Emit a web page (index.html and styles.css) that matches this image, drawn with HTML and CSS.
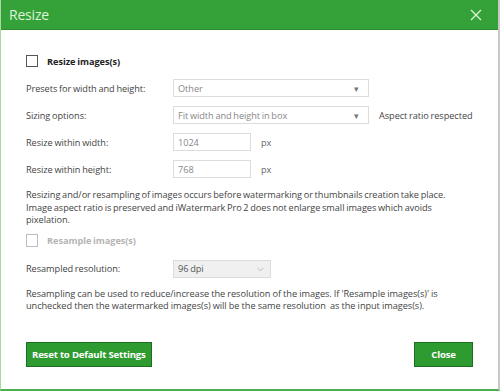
FILE: index.html
```html
<!DOCTYPE html>
<html>
<head>
<meta charset="utf-8">
<title>Resize</title>
<link rel="stylesheet" href="styles.css">
</head>
<body>
<div class="dialog">
	<div class="titlebar">
		<span class="title">Resize</span>
		<svg class="close" width="12" height="12" viewBox="0 0 12 12"><path d="M1 1L11 11M11 1L1 11" stroke="#d9f2d4" stroke-width="1.4" fill="none"/></svg>
	</div>
	<div class="content">
		<label class="check"><span class="box"></span>Resize images(s)</label>
		<div class="row first">
			<span class="label">Presets for width and height:</span>
			<div class="select wide">Other<span class="arrow">&#9662;</span></div>
		</div>
		<div class="row">
			<span class="label">Sizing options:</span>
			<div class="select wide">Fit width and height in box<span class="arrow">&#9662;</span></div>
			<span class="note">Aspect ratio respected</span>
		</div>
		<div class="row">
			<span class="label">Resize within width:</span>
			<div class="input">1024</div>
			<span class="unit">px</span>
		</div>
		<div class="row">
			<span class="label">Resize within height:</span>
			<div class="input">768</div>
			<span class="unit">px</span>
		</div>
		<p class="info">Resizing and/or resampling of images occurs before watermarking or thumbnails creation take place. Image aspect ratio is preserved and iWatermark Pro 2 does not enlarge small images which avoids pixelation.</p>
		<label class="check disabled"><span class="box"></span>Resample images(s)</label>
		<div class="row res">
			<span class="label">Resampled resolution:</span>
			<div class="select dpi">96 dpi<svg class="chev" width="7" height="5" viewBox="0 0 7 5"><path d="M0.5 0.8L3.5 3.8L6.5 0.8" stroke="#bbb" fill="none"/></svg></div>
		</div>
		<p class="info second">Resampling can be used to reduce/increase the resolution of the images. If 'Resample images(s)' is unchecked then the watermarked images(s) will be the same resolution&nbsp; as the input images(s).</p>
		<div class="buttons">
			<button class="btn">Reset to Default Settings</button>
			<button class="btn close-btn">Close</button>
		</div>
	</div>
</div>
</body>
</html>
```

FILE: styles.css
```css
*{margin:0; padding:0; box-sizing:border-box;}
body{width:500px; height:391px; background:#fff; font-family:"Open Sans","Liberation Sans",sans-serif; color:#444; overflow:hidden;}
.dialog{width:500px; height:391px; display:flex; flex-direction:column; border-left:1px solid #a8d9a2; border-right:2px solid #c8c8c8; border-bottom:2px solid #4caf4c;}
.titlebar{height:30px; background:#35a239; display:flex; align-items:center; justify-content:space-between; padding:0 16px 0 8px; border-bottom:1px solid #2a8c2f;}
.title{font-size:14px; color:#dff3da; letter-spacing:-0.2px;}
.close{margin-top:1px;}
.content{flex:1; padding:24px 25px 0 25px; font-size:9.2px; letter-spacing:-0.05px; word-spacing:-0.6px; display:flex; flex-direction:column;}
.check{display:flex; align-items:center; font-weight:bold; color:#222; height:14px;}
.check .box{width:12px; height:12px; border:1px solid #555; margin-right:9px; background:#fff;}
.check.disabled{color:#b4b4b4; margin-top:7px;}
.check.disabled .box{border-color:#bdbdbd; height:13px;}
.row{display:flex; align-items:center; height:18px; margin-top:9px; white-space:nowrap;}
.row.first{margin-top:11px;}
.label{width:147px; flex:none;}
.select,.input{height:18px; border:1px solid #dcdcdc; color:#888; display:flex; align-items:center; padding:0 4px; position:relative;}
.wide{width:196px;}
.arrow{position:absolute; right:9px; top:2px; font-size:9px; color:#777;}
.note{margin-left:10px;}
.input{width:78px;}
.unit{margin-left:10px; color:#666;}
.info{margin-top:11px; line-height:12.6px;}
.info.second{margin-top:10px; word-spacing:-0.2px;}
.row.res{margin-top:12px;}
.dpi{width:98px; background:#f0f0f0; color:#555;}
.chev{position:absolute; right:6px; top:6px;}
.buttons{display:flex; justify-content:space-between; margin-top:29px;}
.btn{height:25px; background:#2e9b31; border:1px solid #1d6e22; color:#fff; font-family:inherit; font-weight:bold; font-size:9.6px; padding:0 5px; letter-spacing:-0.2px;}
.close-btn{width:59px;}
```
